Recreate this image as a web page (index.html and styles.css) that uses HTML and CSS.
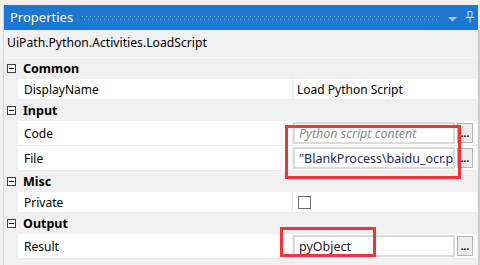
FILE: index.html
```html
<!DOCTYPE html>
<html>
<head>
<meta charset="utf-8">
<link rel="stylesheet" href="styles.css">
</head>
<body>
<div class="panel">
  <div class="titlebar">
    <span class="title">Properties</span>
    <span class="grip"></span>
    <svg class="drop" width="9" height="5" viewBox="0 0 9 5"><path d="M0 0H9L4.5 4.5Z" fill="#a9c9ef"/></svg>
    <svg class="pin" width="10" height="12" viewBox="0 0 10 12"><path d="M3 0.5H7V6.5M3 0.5V6.5M0.5 6.5H9.5M5 6.5V11.5" stroke="#d6e6f8" stroke-width="1" fill="none"/></svg>
  </div>
  <div class="typename">UiPath.Python.Activities.LoadScript</div>
  <div class="grid">
    <div class="cat"><span class="toggle"></span>Common</div>
    <div class="row plain"><span class="label">DisplayName</span><span class="value">Load Python Script</span></div>
    <div class="cat"><span class="toggle"></span>Input</div>
    <div class="row edit"><span class="label">Code</span><span class="value"><span class="box placeholder">Python script content</span><span class="btn">...</span></span></div>
    <div class="row edit"><span class="label">File</span><span class="value"><span class="box expr">"BlankProcess\baidu_ocr.p</span><span class="btn">...</span></span></div>
    <div class="cat"><span class="toggle"></span>Misc</div>
    <div class="row plain"><span class="label">Private</span><span class="value"><span class="check"></span></span></div>
    <div class="cat"><span class="toggle"></span>Output</div>
    <div class="row edit"><span class="label">Result</span><span class="value"><span class="box expr2">pyObject</span><span class="btn">...</span></span></div>
  </div>
  <div class="mark mark1"></div>
  <div class="mark mark2"></div>
</div>
</body>
</html>
```
FILE: styles.css
```css
html, body {
  margin: 0;
  padding: 0;
  background: #f0f0f0;
  font-family: "Noto Sans", "Liberation Sans", sans-serif;
  font-size: 12px;
  color: #000;
  overflow: hidden;
}
body {
  width: 480px;
  height: 265px;
}
.panel {
  position: relative;
  margin: 5px 0 0 3px;
  width: 477px;
  height: 260px;
  border-left: 1px solid #d6d6d6;
  box-sizing: border-box;
}
.panel::after {
  content: "";
  position: absolute;
  right: 0;
  top: 25px;
  bottom: 0;
  width: 2px;
  background: #cdcdcd;
}
.titlebar {
  height: 25px;
  background: #1c76d2;
  display: flex;
  align-items: center;
  padding: 0 3px 0 6px;
  width: 474px;
  box-sizing: border-box;
}
.title {
  color: #fff;
  font-size: 13px;
  line-height: 25px;
}
.grip {
  flex: 1;
  height: 4px;
  margin: 1px 9px 0 9px;
  background-image: linear-gradient(90deg, #7fb1ea 1px, transparent 1px), linear-gradient(90deg, #7fb1ea 1px, transparent 1px);
  background-size: 4px 1px, 4px 1px;
  background-position: 0 0, 2px 3px;
  background-repeat: repeat-x;
}
.drop {
  margin: 3px 8px 0 0;
}
.pin {
  margin: -2px 0 0 0;
}
.typename {
  height: 27px;
  line-height: 26px;
  padding-left: 3px;
  font-size: 12.2px;
  border-bottom: 1px solid #f7f7f7;
}
.grid {
  width: 473px;
}
.cat {
  height: 21px;
  display: flex;
  align-items: center;
  font-weight: bold;
  font-size: 12.5px;
}
.toggle {
  width: 7px;
  height: 7px;
  border: 1px solid #404040;
  margin: 0 7px 0 3px;
  position: relative;
  background: #fff;
}
.toggle::after {
  content: "";
  position: absolute;
  left: 1px;
  top: 3px;
  width: 5px;
  height: 1px;
  background: #000;
}
.row {
  display: flex;
  margin-left: 14px;
  background: #fff;
  border-bottom: 1px solid #ececec;
}
.row.plain { height: 20px; }
.row.edit { height: 24px; }
.label {
  width: 275px;
  box-sizing: border-box;
  padding-left: 6px;
  border-right: 1px solid #ececec;
  display: flex;
  align-items: center;
}
.value {
  flex: 1;
  display: flex;
  align-items: center;
  padding-left: 4px;
}
.row.edit .value {
  padding-left: 0;
}
.box {
  width: 162px;
  height: 22px;
  box-sizing: border-box;
  border: 2px solid #dadada;
  display: flex;
  align-items: center;
  padding-left: 4px;
  white-space: nowrap;
  overflow: hidden;
  font-size: 12.5px;
}
.placeholder {
  color: #8a8a8a;
  font-style: italic;
}
.expr {
  color: #1b2a5a;
}
.expr2 {
  color: #222;
}
.btn {
  width: 16px;
  height: 20px;
  margin-left: 2px;
  box-sizing: border-box;
  border: 1px solid #b4b4b4;
  background: #ececec;
  font-weight: bold;
  font-size: 10px;
  display: flex;
  align-items: flex-end;
  justify-content: center;
  padding-bottom: 4px;
  line-height: 1;
}
.check {
  width: 13px;
  height: 13px;
  box-sizing: border-box;
  border: 1px solid #6e6e6e;
  margin-left: 1px;
}
.mark {
  position: absolute;
  border: 3px solid #f2343a;
  box-sizing: border-box;
}
.mark1 {
  left: 281px;
  top: 120px;
  width: 176px;
  height: 54px;
}
.mark2 {
  left: 276px;
  top: 222px;
  width: 96px;
  height: 30px;
}
```
